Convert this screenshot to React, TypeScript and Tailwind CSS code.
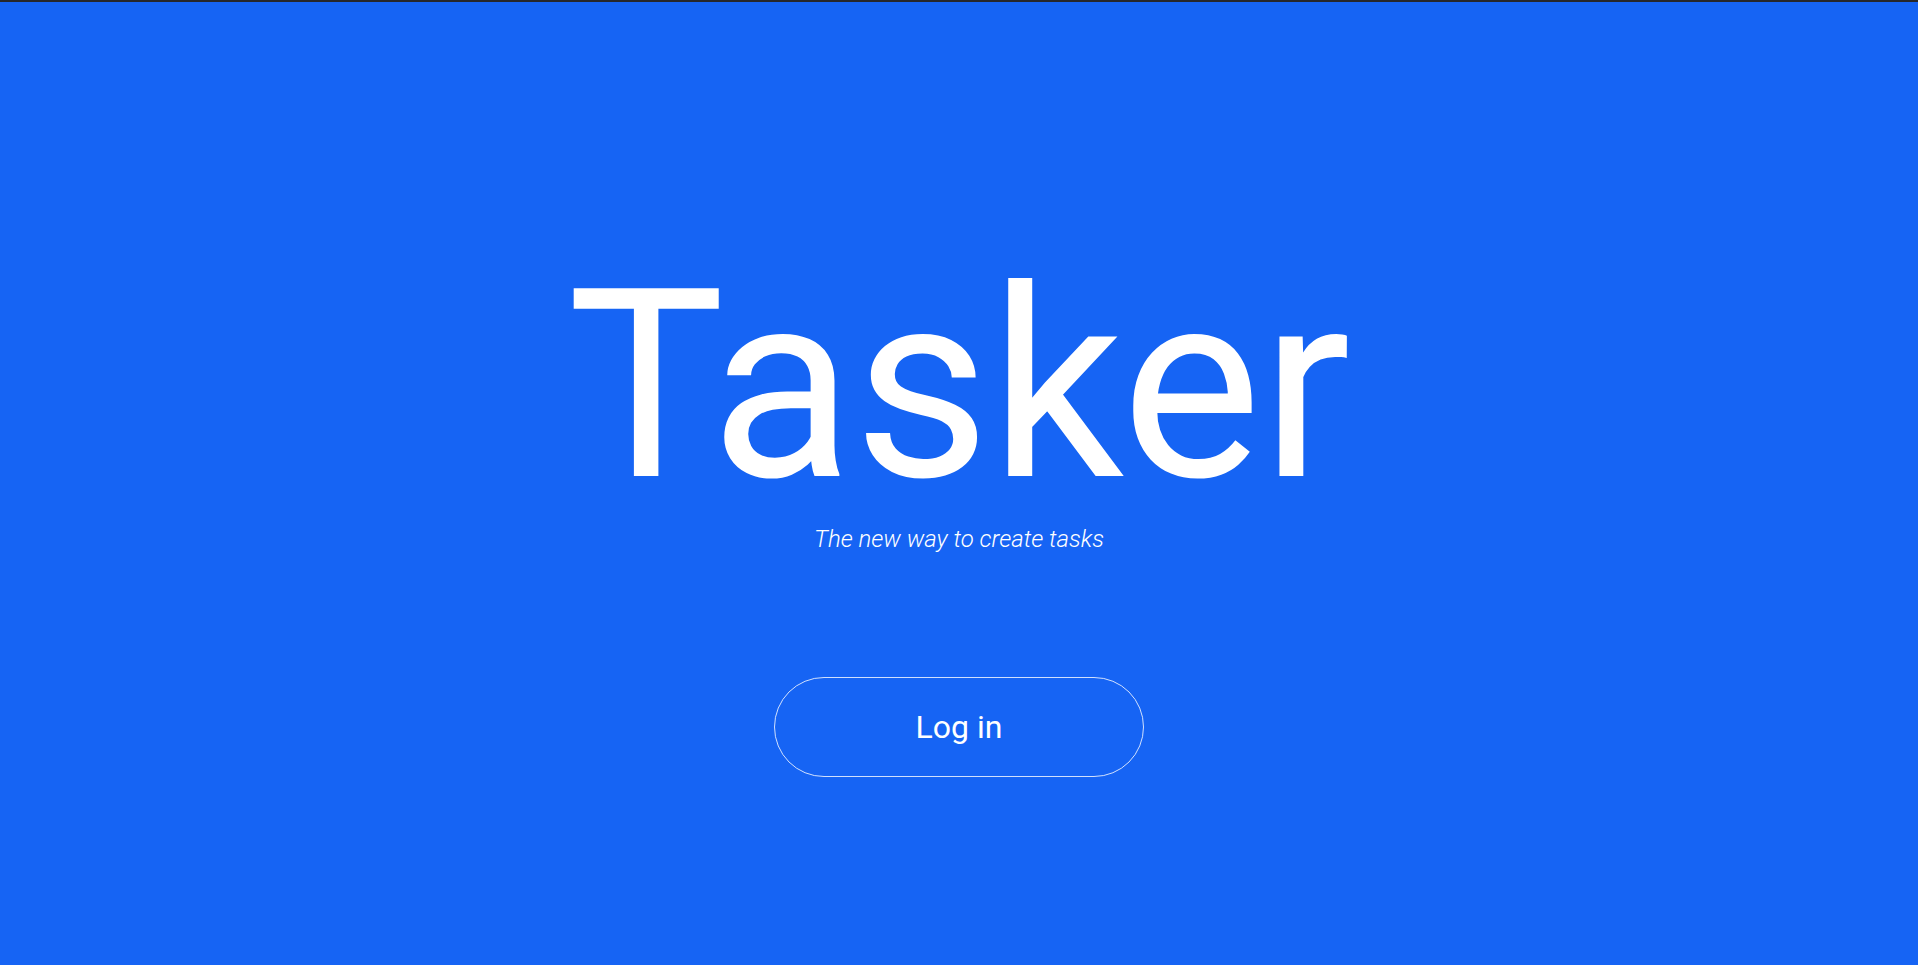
import React from 'react';

export default function App() {
  return (
    <div className="flex min-h-screen flex-col bg-[#1664f4] font-['Roboto',sans-serif] text-white">
      {/* window edge */}
      <div className="h-[2px] shrink-0 bg-[#26272b]" />

      <main className="flex flex-col items-center pt-[272px]">
        <h1 className="h-[224px] text-[264px] font-normal leading-[224px]">Tasker</h1>
        <p className="mt-[29px] text-[24px] font-light italic leading-none">The new way to create tasks</p>

        <button
          type="button"
          className="mt-[126px] flex h-[100px] w-[370px] items-center justify-center rounded-full border border-white/80 text-[32px] font-normal leading-none"
        >
          Log in
        </button>
      </main>
    </div>
  );
}
